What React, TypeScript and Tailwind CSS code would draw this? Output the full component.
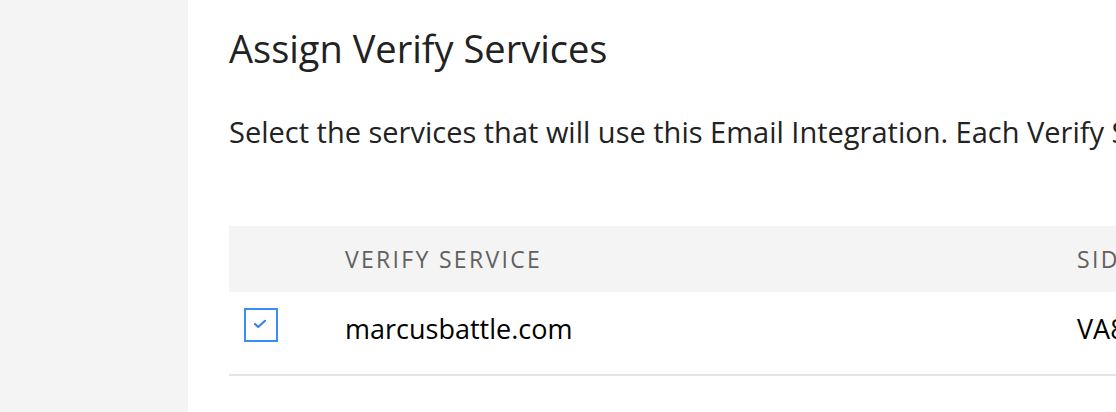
const services = [{ name: "marcusbattle.com", sid: "VA8b1c2d3e4f5a6b7c8d9e0f1a2b3c4d5e" }];

const CheckIcon = () => (
  <svg width="14" height="10" viewBox="0 0 14 10" fill="none" className="-mt-[2px] -ml-[2px]">
    <path d="M2 5 5.2 8 12 1.8" stroke="#3186f0" strokeWidth="2.2" strokeLinecap="round" strokeLinejoin="round" />
  </svg>
);

export default function App() {
  return (
    <div className="flex h-[412px] w-[1116px] overflow-hidden bg-white font-['Open_Sans',sans-serif] text-[#222]">
      <aside className="w-[188px] shrink-0 bg-[#f4f4f4]" />
      <main className="min-w-0 flex-1 overflow-hidden pl-[41px] pt-[26px]">
        <h1 className="text-[38px] leading-[44px] font-normal text-[#222]">Assign Verify Services</h1>
        <p className="mt-[45px] whitespace-nowrap text-[29px] leading-[34px] text-[#222]">
          Select the services that will use this Email Integration. Each Verify Service can only be assigned to one Email Integration.
        </p>
        <table className="mt-[77px] w-[1400px] border-collapse text-left">
          <thead>
            <tr className="h-[66px] bg-[#f4f4f4]">
              <th className="w-[116px]" />
              <th className="w-[732px] text-[23px] font-normal uppercase tracking-[0.1em] text-[#606060]">Verify Service</th>
              <th className="text-[23px] font-normal uppercase tracking-[0.1em] text-[#606060]">SID</th>
            </tr>
          </thead>
          <tbody>
            {services.map((s) => (
              <tr key={s.sid} className="h-[83px] border-b-2 border-[#e4e4e4]">
                <td className="pl-[15px] pt-[16px] align-top">
                  <span className="flex h-[34px] w-[34px] items-center justify-center border-2 border-[#3a8ef7] bg-white">
                    <CheckIcon />
                  </span>
                </td>
                <td className="pb-[8px] text-[27px] text-black">{s.name}</td>
                <td className="pb-[8px] text-[27px] text-black">{s.sid}</td>
              </tr>
            ))}
          </tbody>
        </table>
      </main>
    </div>
  );
}
